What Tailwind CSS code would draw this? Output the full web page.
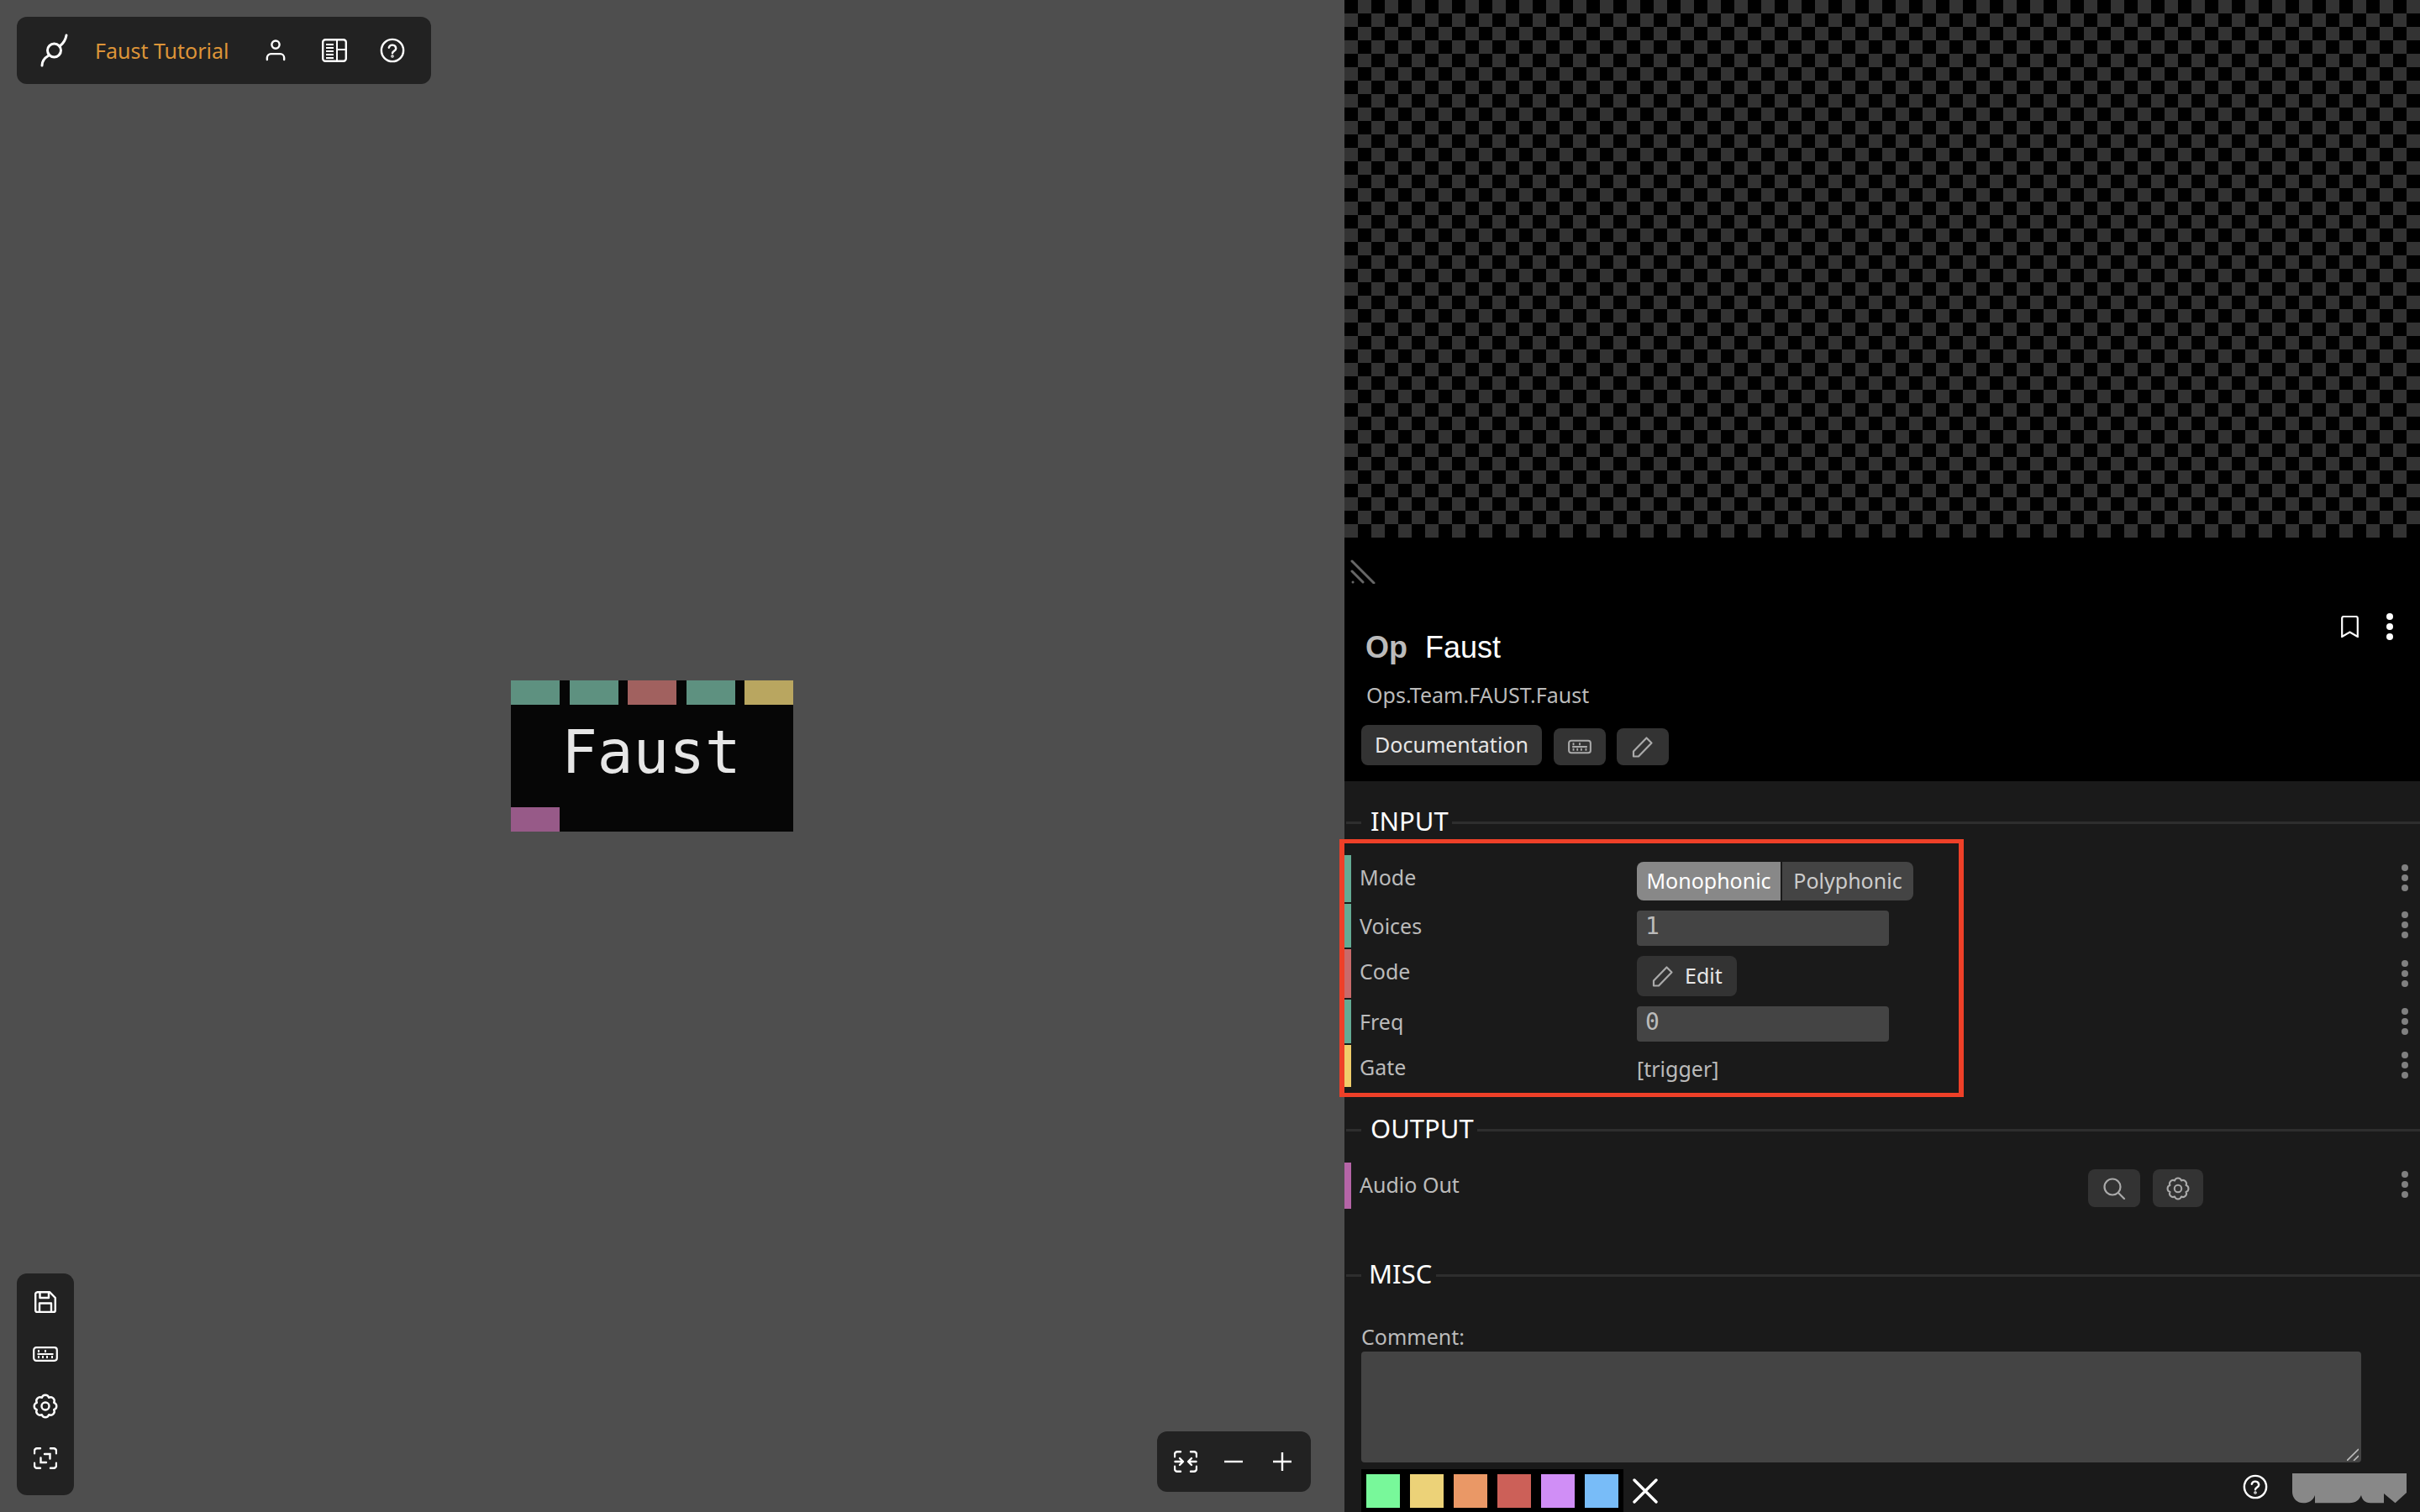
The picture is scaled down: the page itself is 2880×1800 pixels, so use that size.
<!DOCTYPE html>
<html lang="en">
<head>
    <meta charset="UTF-8">
    <title>Faust Tutorial</title>
    <script src="https://cdn.jsdelivr.net/npm/@tailwindcss/browser@4"></script>
</head>
<body class="bg-[#4e4e4e] font-['Noto_Sans',sans-serif] overflow-hidden">
<div class="flex h-[1800px] w-[2880px] overflow-hidden">

    <!-- patch canvas -->
    <div class="relative w-[1600px] h-full bg-[#4e4e4e]">
        <div class="absolute left-[20px] top-[20px] w-[493px] h-[80px] rounded-[12px] bg-[#222] flex items-center">
            <svg class="ml-[26px] w-[36px] h-[40px]" viewBox="46 40 36 40" fill="none" stroke="#fff" stroke-width="3" stroke-linecap="round">
                <circle cx="64.5" cy="60" r="8"/>
                <path d="M79 42 C78 48 75 52 71 55"/>
                <path d="M50 78 C50 73 53 69 58 66"/>
            </svg>
            <span class="ml-[31px] w-[203px] text-[25px] leading-[36px] text-[#dd9438]">Faust Tutorial</span>
            <svg class="w-[24px] h-[28px]" viewBox="0 0 26 28" fill="none" stroke="#fff" stroke-width="2.6" stroke-linecap="round">
                <circle cx="13" cy="6.5" r="5"/>
                <path d="M2 26v-2.5a5 5 0 0 1 5-5h12a5 5 0 0 1 5 5V26"/>
            </svg>
            <svg class="ml-[43px] w-[30px] h-[28px]" viewBox="0 0 30 28" fill="none" stroke="#fff" stroke-width="2.4">
                <rect x="1.2" y="1.2" width="27.6" height="25.6" rx="3"/>
                <path d="M18 1v26M18 13h11M5 7h9M5 11h9M5 15h9M5 19h9M5 23h9" stroke-width="2"/>
            </svg>
            <svg class="ml-[39px] w-[30px] h-[30px]" viewBox="0 0 32 32" fill="none" stroke="#fff" stroke-width="2.6" stroke-linecap="round">
                <circle cx="16" cy="16" r="14"/>
                <path d="M11.5 12.5a4.6 4.6 0 0 1 9 1c0 3-4.5 3.5-4.5 6"/>
                <circle cx="16" cy="23.5" r=".6"/>
            </svg>
        </div>

        <!-- op node -->
        <div class="absolute left-[608px] top-[810px] w-[336px] h-[180px] bg-[#060606] flex flex-col">
            <div class="flex justify-between h-[29px]">
                <div class="w-[58px] bg-[#5e9180]"></div>
                <div class="w-[58px] bg-[#5e9180]"></div>
                <div class="w-[58px] bg-[#a1615f]"></div>
                <div class="w-[58px] bg-[#5e9180]"></div>
                <div class="w-[58px] bg-[#b9a660]"></div>
            </div>
            <div class="flex-1 flex items-center justify-center font-['DejaVu_Sans_Mono',monospace] text-[71px] leading-[80px] text-[#e6e6e6] pb-[8px] pr-[2px]">Faust</div>
            <div class="w-[58px] h-[29px] bg-[#975a88]"></div>
        </div>

        <div class="absolute left-[20px] top-[1516px] w-[68px] h-[264px] rounded-[12px] bg-[#222] flex flex-col items-center">
            <svg class="mt-[21px] w-[26px] h-[26px]" viewBox="0 0 26 26" fill="none" stroke="#fff" stroke-width="2.4" stroke-linejoin="round">
                <path d="M3.5 1.2H18L24.8 8v15a2 2 0 0 1-2 2H3.200a2 2 0 0 1-2-2V3.500a2 2 0 0 1 2-2z"/>
                <path d="M6.500 1.500v6.500h10.500V1.500M6 25V14.500h14V25"/>
            </svg>
            <svg class="mt-[40px] w-[30px] h-[18px]" viewBox="0 0 30 18" fill="none" stroke="#fff" stroke-width="2.2">
                <rect x="1.200" y="1.200" width="27.600" height="15.600" rx="3"/>
                <path d="M7 4v3M15 4v3M5.500 9h19M7 11v3M12 11v3M17 11v3M23 11v3" stroke-width="2"/>
            </svg>
            <svg class="mt-[37px] w-[32px] h-[32px]" viewBox="0 0 32 32" fill="none" stroke="#fff" stroke-width="2.400" stroke-linejoin="round">
                <path d="M11.790 5.840A4.400 4.400 0 0 1 20.210 5.840A4.400 4.400 0 0 1 26.160 11.790A4.400 4.400 0 0 1 26.160 20.210A4.400 4.400 0 0 1 20.210 26.160A4.400 4.400 0 0 1 11.790 26.160A4.400 4.400 0 0 1 5.840 20.210A4.400 4.400 0 0 1 5.840 11.790A4.400 4.400 0 0 1 11.790 5.840Z"/>
                <circle cx="16" cy="16" r="4.500"/>
            </svg>
            <svg class="mt-[33px] w-[28px] h-[26px]" viewBox="0 0 28 26" fill="none" stroke="#fff" stroke-width="2.400" stroke-linecap="round">
                <path d="M8 1.200H4a3 3 0 0 0-3 3v3M20 1.200h4a3 3 0 0 1 3 3v3M8 24.800H4a3 3 0 0 1-3-3v-3M20 24.800h4a3 3 0 0 0 3-3v-3"/>
                <path d="M13 8h6.500v5.500M15 18H8.500v-5.500"/>
            </svg>
        </div>

        <div class="absolute left-[1377px] top-[1704px] w-[183px] h-[72px] rounded-[12px] bg-[#222] flex items-center">
            <svg class="ml-[20px] w-[28px] h-[26px]" viewBox="0 0 28 26" fill="none" stroke="#fff" stroke-width="2.400" stroke-linecap="round" stroke-linejoin="round">
                <path d="M8 1.200H4a3 3 0 0 0-3 3v3M20 1.200h4a3 3 0 0 1 3 3v3M8 24.800H4a3 3 0 0 1-3-3v-3M20 24.800h4a3 3 0 0 0 3-3v-3"/>
                <path d="M1.500 13h9M7 9l4 4-4 4M26.500 13h-9M21 9l-4 4 4 4"/>
            </svg>
            <svg class="ml-[32px] w-[22px] h-[22px]" viewBox="0 0 22 22" stroke="#fff" stroke-width="2.400"><path d="M0 11h22"/></svg>
            <svg class="ml-[36px] w-[22px] h-[22px]" viewBox="0 0 22 22" stroke="#fff" stroke-width="2.400"><path d="M0 11h22M11 0v22"/></svg>
        </div>
    </div>

    <!-- right panel -->
    <div class="relative w-[1280px] h-full bg-[#1a1a1a] flex flex-col">
        <div class="h-[640px] bg-[conic-gradient(#333_25%,#000_0_50%,#333_0_75%,#000_0)] bg-size-[32px_32px]"></div>

        <div class="relative h-[290px] bg-black">
            <svg class="absolute left-[7px] top-[25px] w-[30px] h-[30px]" viewBox="0 0 30 30" stroke="#666" stroke-width="3" stroke-linecap="round">
                <path d="M2 3l26 26M2 15l13 13M3 28h.1"/>
            </svg>
            <svg class="absolute left-[1186px] top-[93px] w-[21px] h-[26px]" viewBox="0 0 21 26" fill="none" stroke="#fff" stroke-width="2.200">
                <path d="M1.200 25V3a2 2 0 0 1 2-2h14.600a2 2 0 0 1 2 2v22l-9.300-5.500z"/>
            </svg>
            <div class="absolute left-[1240px] top-[90px] flex flex-col gap-[4px]">
                <div class="w-[8px] h-[8px] rounded-full bg-white"></div>
                <div class="w-[8px] h-[8px] rounded-full bg-white"></div>
                <div class="w-[8px] h-[8px] rounded-full bg-white"></div>
            </div>

            <div class="pl-[25px] pt-[110px] flex font-['Liberation_Sans',sans-serif] text-[36px] leading-[42px]">
                <span class="font-bold text-[#bbb] w-[71px]">Op</span>
                <span class="text-white">Faust</span>
            </div>
            <div class="pl-[26px] mt-[17px] text-[25px] leading-[36px] text-[#bbb]">Ops.Team.FAUST.Faust</div>
            <div class="pl-[20px] mt-[18px] flex items-end">
                <div class="w-[215px] h-[48px] rounded-[8px] bg-[#333] flex items-center justify-center text-[25px] text-[#e6e6e6]">Documentation</div>
                <div class="ml-[14px] w-[62px] h-[44px] rounded-[8px] bg-[#333] flex items-center justify-center">
                    <svg class="w-[28px] h-[18px]" viewBox="0 0 30 18" fill="none" stroke="#aaa" stroke-width="2.200">
                        <rect x="1.200" y="1.200" width="27.600" height="15.600" rx="3"/>
                        <path d="M7 4v3M15 4v3M5.500 9h19M7 11v3M12 11v3M17 11v3M23 11v3" stroke-width="2"/>
                    </svg>
                </div>
                <div class="ml-[13px] w-[62px] h-[44px] rounded-[8px] bg-[#333] flex items-center justify-center">
                    <svg class="w-[26px] h-[26px]" viewBox="0 0 26 26" fill="none" stroke="#aaa" stroke-width="2.200" stroke-linejoin="round">
                        <path d="M2 24.500v-6L17.500 2.500l6 6L8 24.500z"/>
                    </svg>
                </div>
            </div>
        </div>

        <div class="mt-[30px] h-[38px] flex items-center text-[31px] leading-[38px] text-white">
            <div class="ml-[2px] w-[18px] h-[3px] bg-[#2e2e2e]"></div>
            <span class="px-[11px] mr-[-7px] pb-[4px]">INPUT</span>
            <div class="flex-1 h-[3px] bg-[#2e2e2e]"></div>
        </div>

        <div class="mt-[20px] flex flex-col gap-[2px] text-[25px] text-[#bbb]">
            <div class="flex h-[56px]">
                <div class="w-[8px] bg-[#64ab94]"></div>
                <div class="w-[340px] pl-[10px] pr-[1px] leading-[52px]">Mode</div>
                <div class="mt-[8px] flex h-[46px] gap-[2px] leading-[44px]">
                    <div class="w-[171px] bg-[#888] rounded-l-[8px] text-white text-center">Monophonic</div>
                    <div class="w-[156px] bg-[#444] rounded-r-[8px] text-[#ccc] text-center">Polyphonic</div>
                </div>
                <div class="ml-auto mr-[14px] mt-[11px] flex flex-col gap-[4px]">
                    <div class="w-[8px] h-[8px] rounded-full bg-[#808080]"></div>
                    <div class="w-[8px] h-[8px] rounded-full bg-[#808080]"></div>
                    <div class="w-[8px] h-[8px] rounded-full bg-[#808080]"></div>
                </div>
            </div>
            <div class="flex h-[52px]">
                <div class="w-[8px] bg-[#64ab94]"></div>
                <div class="w-[340px] pl-[10px] leading-[52px]">Voices</div>
                <div class="mt-[8px] w-[300px] h-[42px] pl-[10px] rounded-[4px] bg-[#444] font-['DejaVu_Sans_Mono',monospace] text-[28px] leading-[38px]">1</div>
                <div class="ml-auto mr-[14px] mt-[9px] flex flex-col gap-[4px]">
                    <div class="w-[8px] h-[8px] rounded-full bg-[#808080]"></div>
                    <div class="w-[8px] h-[8px] rounded-full bg-[#808080]"></div>
                    <div class="w-[8px] h-[8px] rounded-full bg-[#808080]"></div>
                </div>
            </div>
            <div class="flex h-[58px]">
                <div class="w-[8px] bg-[#c96a6a]"></div>
                <div class="w-[340px] pl-[10px] leading-[52px]">Code</div>
                <div class="mt-[8px] w-[119px] h-[48px] rounded-[8px] bg-[#333] flex items-center pl-[18px] gap-[13px] text-[#e6e6e6]">
                    <svg class="w-[26px] h-[26px]" viewBox="0 0 26 26" fill="none" stroke="#aaa" stroke-width="2.200" stroke-linejoin="round">
                        <path d="M2 24.500v-6L17.500 2.500l6 6L8 24.500z"/>
                    </svg>
                    <span>Edit</span>
                </div>
                <div class="ml-auto mr-[14px] mt-[13px] flex flex-col gap-[4px]">
                    <div class="w-[8px] h-[8px] rounded-full bg-[#808080]"></div>
                    <div class="w-[8px] h-[8px] rounded-full bg-[#808080]"></div>
                    <div class="w-[8px] h-[8px] rounded-full bg-[#808080]"></div>
                </div>
            </div>
            <div class="flex h-[52px]">
                <div class="w-[8px] bg-[#64ab94]"></div>
                <div class="w-[340px] pl-[10px] leading-[52px]">Freq</div>
                <div class="mt-[8px] w-[300px] h-[42px] pl-[10px] rounded-[4px] bg-[#444] font-['DejaVu_Sans_Mono',monospace] text-[28px] leading-[38px]">0</div>
                <div class="ml-auto mr-[14px] mt-[10px] flex flex-col gap-[4px]">
                    <div class="w-[8px] h-[8px] rounded-full bg-[#808080]"></div>
                    <div class="w-[8px] h-[8px] rounded-full bg-[#808080]"></div>
                    <div class="w-[8px] h-[8px] rounded-full bg-[#808080]"></div>
                </div>
            </div>
            <div class="flex h-[50px]">
                <div class="w-[8px] bg-[#f0cd6a]"></div>
                <div class="w-[340px] pl-[10px] leading-[52px]">Gate</div>
                <div class="mt-[4px] leading-[48px]">[trigger]</div>
                <div class="ml-auto mr-[14px] mt-[8px] flex flex-col gap-[4px]">
                    <div class="w-[8px] h-[8px] rounded-full bg-[#808080]"></div>
                    <div class="w-[8px] h-[8px] rounded-full bg-[#808080]"></div>
                    <div class="w-[8px] h-[8px] rounded-full bg-[#808080]"></div>
                </div>
            </div>
        </div>

        <div class="mt-[32px] h-[38px] flex items-center text-[31px] leading-[38px] text-white">
            <div class="ml-[2px] w-[18px] h-[3px] bg-[#2e2e2e]"></div>
            <span class="px-[11px] mr-[-7px] pb-[4px]">OUTPUT</span>
            <div class="flex-1 h-[3px] bg-[#2e2e2e]"></div>
        </div>

        <div class="mt-[20px] flex h-[55px] text-[25px] text-[#bbb]">
            <div class="w-[8px] bg-[#b565a7]"></div>
            <div class="pl-[10px] leading-[52px]">Audio Out</div>
            <div class="ml-auto mt-[8px] w-[62px] h-[45px] rounded-[8px] bg-[#333] flex items-center justify-center">
                <svg class="w-[28px] h-[26px]" viewBox="0 0 28 26" fill="none" stroke="#aaa" stroke-width="2.200" stroke-linecap="round">
                    <circle cx="12" cy="11" r="9.500"/>
                    <path d="M19 18l7 7"/>
                </svg>
            </div>
            <div class="ml-[15px] mt-[8px] w-[60px] h-[45px] rounded-[8px] bg-[#333] flex items-center justify-center">
                <svg class="w-[30px] h-[30px]" viewBox="0 0 32 32" fill="none" stroke="#aaa" stroke-width="2.200" stroke-linejoin="round">
                    <path d="M11.790 5.840A4.400 4.400 0 0 1 20.210 5.840A4.400 4.400 0 0 1 26.160 11.790A4.400 4.400 0 0 1 26.160 20.210A4.400 4.400 0 0 1 20.210 26.160A4.400 4.400 0 0 1 11.790 26.160A4.400 4.400 0 0 1 5.840 20.210A4.400 4.400 0 0 1 5.840 11.790A4.400 4.400 0 0 1 11.790 5.840Z"/>
                    <circle cx="16" cy="16" r="4.500"/>
                </svg>
            </div>
            <div class="ml-[236px] mr-[14px] mt-[10px] flex flex-col gap-[4px]">
                <div class="w-[8px] h-[8px] rounded-full bg-[#808080]"></div>
                <div class="w-[8px] h-[8px] rounded-full bg-[#808080]"></div>
                <div class="w-[8px] h-[8px] rounded-full bg-[#808080]"></div>
            </div>
        </div>

        <div class="mt-[60px] h-[38px] flex items-center text-[31px] leading-[38px] text-white">
            <div class="ml-[2px] w-[18px] h-[3px] bg-[#2e2e2e]"></div>
            <span class="pl-[9px] pr-[12px] mr-[-7px] pb-[4px]">MISC</span>
            <div class="flex-1 h-[3px] bg-[#2e2e2e]"></div>
        </div>

        <div class="pl-[20px] mt-[36px] h-[36px] text-[25px] leading-[36px] text-[#bbb]">Comment:</div>
        <div class="relative ml-[20px] w-[1190px] h-[132px]">
            <textarea class="block w-full h-full resize-none rounded-[4px] bg-[#444]"></textarea>
            <svg class="absolute right-[3px] bottom-[2px] w-[14px] h-[15px]" viewBox="0 0 14 15" stroke="#bbb" stroke-width="1.600"><path d="M0 15L14 1M8 15l6-6"/></svg>
        </div>

        <div class="ml-[20px] mt-[8px] flex items-start">
            <div class="flex gap-[12px] bg-black p-[6px] h-[51px]">
                <div class="w-[40px] h-[40px] bg-[#78f89a]"></div>
                <div class="w-[40px] h-[40px] bg-[#ecd278]"></div>
                <div class="w-[40px] h-[40px] bg-[#ea9866]"></div>
                <div class="w-[40px] h-[40px] bg-[#cc6058]"></div>
                <div class="w-[40px] h-[40px] bg-[#d08ef6]"></div>
                <div class="w-[40px] h-[40px] bg-[#78bcf8]"></div>
            </div>
            <svg class="ml-[11px] mt-[11px] w-[30px] h-[30px]" viewBox="0 0 30 30" stroke="#fff" stroke-width="3.400" stroke-linecap="round"><path d="M2 2l26 26M28 2L2 28"/></svg>
            <svg class="ml-[696px] mt-[6px] w-[30px] h-[30px]" viewBox="0 0 32 32" fill="none" stroke="#fff" stroke-width="2.600" stroke-linecap="round">
                <circle cx="16" cy="16" r="14"/>
                <path d="M11.500 12.500a4.600 4.600 0 0 1 9 1c0 3-4.500 3.500-4.500 6"/>
                <circle cx="16" cy="23.500" r=".6"/>
            </svg>
            <svg class="ml-[29px] mt-[5px] w-[136px] h-[36px]" viewBox="0 0 136 36" fill="#888">
                <path d="M0 0H136V23L122.500 35.300L109 24V35.300H93C86 35 83 31 82 26C80 31 76 35.300 68 35.300H27V26C25 32 20 35.300 13 35.300C5 35.300 0 29 0 22Z"/>
            </svg>
        </div>

        <!-- red highlight -->
        <div class="absolute left-[-6px] top-[999px] w-[743px] h-[307px] border-y-[5px] border-x-[6px] border-[#ee4028]"></div>
    </div>
</div>
</body>
</html>
